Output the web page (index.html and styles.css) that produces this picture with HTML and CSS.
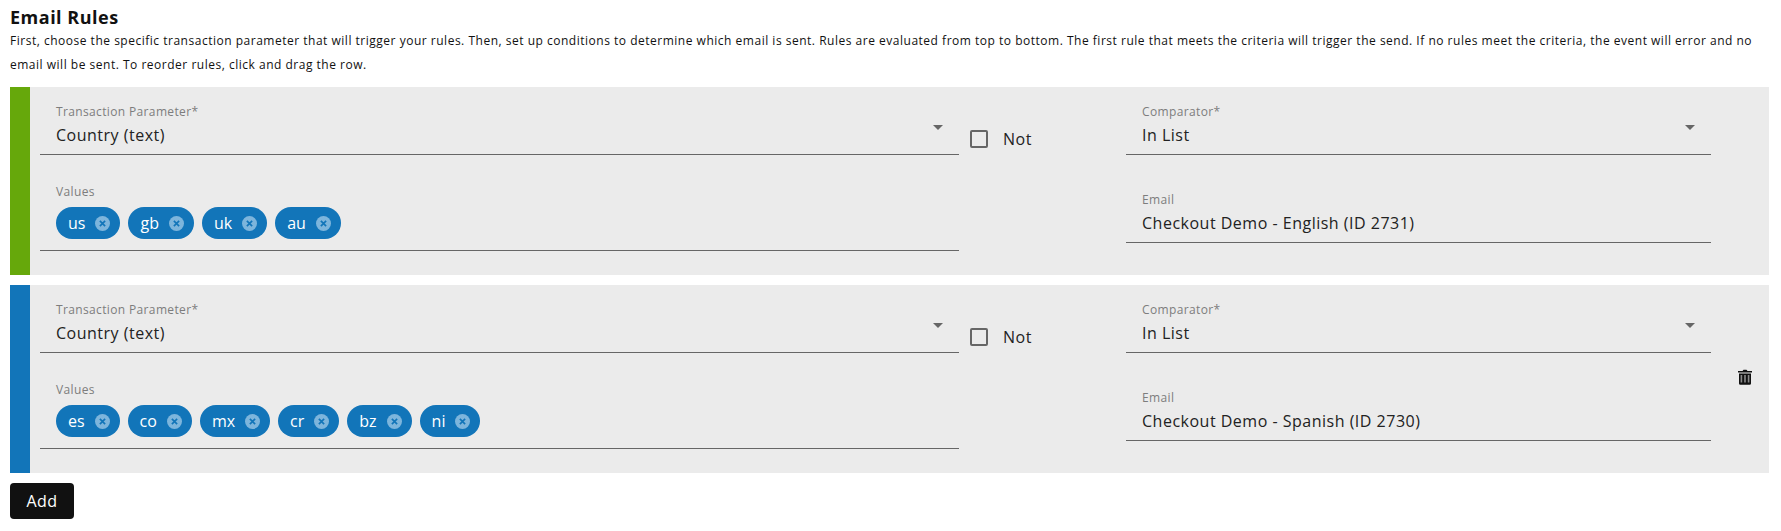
FILE: index.html
```html
<!DOCTYPE html>
<html lang="en">
<head>
    <meta charset="UTF-8">
    <meta name="viewport" content="width=device-width, initial-scale=1.0">
    <title>Email Rules</title>
    <link rel="stylesheet" href="styles.css">
</head>
<body>
    <h1 class="page-title">Email Rules</h1>
    <p class="page-intro">First, choose the specific transaction parameter that will trigger your rules. Then, set up conditions to determine which email is sent. Rules are evaluated from top to bottom. The first rule that meets the criteria will trigger the send. If no rules meet the criteria, the event will error and no email will be sent. To reorder rules, click and drag the row.</p>

    <div class="rule">
        <div class="rule-bar rule-bar-green"></div>
        <div class="rule-grid">
            <div class="field">
                <div class="field-label">Transaction Parameter*</div>
                <div class="field-value">Country (text)</div>
                <span class="select-arrow"></span>
            </div>
            <label class="not-check"><span class="check-box"></span>Not</label>
            <div class="field">
                <div class="field-label">Comparator*</div>
                <div class="field-value">In List</div>
                <span class="select-arrow"></span>
            </div>

            <div class="field field-chips">
                <div class="field-label">Values</div>
                <div class="chips">
                    <span class="chip">us<svg class="chip-x" viewBox="0 0 16 16"><circle cx="8" cy="8" r="8" fill="#7db5dc"/><path d="M5.2 5.2l5.6 5.6M10.8 5.2l-5.6 5.6" stroke="#1275b9" stroke-width="1.8" fill="none"/></svg></span>
                    <span class="chip">gb<svg class="chip-x" viewBox="0 0 16 16"><circle cx="8" cy="8" r="8" fill="#7db5dc"/><path d="M5.2 5.2l5.6 5.6M10.8 5.2l-5.6 5.6" stroke="#1275b9" stroke-width="1.8" fill="none"/></svg></span>
                    <span class="chip">uk<svg class="chip-x" viewBox="0 0 16 16"><circle cx="8" cy="8" r="8" fill="#7db5dc"/><path d="M5.2 5.2l5.6 5.6M10.8 5.2l-5.6 5.6" stroke="#1275b9" stroke-width="1.8" fill="none"/></svg></span>
                    <span class="chip">au<svg class="chip-x" viewBox="0 0 16 16"><circle cx="8" cy="8" r="8" fill="#7db5dc"/><path d="M5.2 5.2l5.6 5.6M10.8 5.2l-5.6 5.6" stroke="#1275b9" stroke-width="1.8" fill="none"/></svg></span>
                </div>
            </div>
            <div></div>
            <div class="field field-email">
                <div class="field-label">Email</div>
                <div class="field-value">Checkout Demo - English (ID 2731)</div>
            </div>
        </div>
    </div>

    <div class="rule">
        <div class="rule-bar rule-bar-blue"></div>
        <div class="rule-grid">
            <div class="field">
                <div class="field-label">Transaction Parameter*</div>
                <div class="field-value">Country (text)</div>
                <span class="select-arrow"></span>
            </div>
            <label class="not-check"><span class="check-box"></span>Not</label>
            <div class="field">
                <div class="field-label">Comparator*</div>
                <div class="field-value">In List</div>
                <span class="select-arrow"></span>
            </div>

            <div class="field field-chips">
                <div class="field-label">Values</div>
                <div class="chips">
                    <span class="chip">es<svg class="chip-x" viewBox="0 0 16 16"><circle cx="8" cy="8" r="8" fill="#7db5dc"/><path d="M5.2 5.2l5.6 5.6M10.8 5.2l-5.6 5.6" stroke="#1275b9" stroke-width="1.8" fill="none"/></svg></span>
                    <span class="chip">co<svg class="chip-x" viewBox="0 0 16 16"><circle cx="8" cy="8" r="8" fill="#7db5dc"/><path d="M5.2 5.2l5.6 5.6M10.8 5.2l-5.6 5.6" stroke="#1275b9" stroke-width="1.8" fill="none"/></svg></span>
                    <span class="chip">mx<svg class="chip-x" viewBox="0 0 16 16"><circle cx="8" cy="8" r="8" fill="#7db5dc"/><path d="M5.2 5.2l5.6 5.6M10.8 5.2l-5.6 5.6" stroke="#1275b9" stroke-width="1.8" fill="none"/></svg></span>
                    <span class="chip">cr<svg class="chip-x" viewBox="0 0 16 16"><circle cx="8" cy="8" r="8" fill="#7db5dc"/><path d="M5.2 5.2l5.6 5.6M10.8 5.2l-5.6 5.6" stroke="#1275b9" stroke-width="1.8" fill="none"/></svg></span>
                    <span class="chip">bz<svg class="chip-x" viewBox="0 0 16 16"><circle cx="8" cy="8" r="8" fill="#7db5dc"/><path d="M5.2 5.2l5.6 5.6M10.8 5.2l-5.6 5.6" stroke="#1275b9" stroke-width="1.8" fill="none"/></svg></span>
                    <span class="chip">ni<svg class="chip-x" viewBox="0 0 16 16"><circle cx="8" cy="8" r="8" fill="#7db5dc"/><path d="M5.2 5.2l5.6 5.6M10.8 5.2l-5.6 5.6" stroke="#1275b9" stroke-width="1.8" fill="none"/></svg></span>
                </div>
            </div>
            <div></div>
            <div class="field field-email">
                <div class="field-label">Email</div>
                <div class="field-value">Checkout Demo - Spanish (ID 2730)</div>
            </div>
        </div>
        <svg class="trash" viewBox="0 0 14 16">
            <path d="M0 2h4.5l1-1.2h3l1 1.2H14v1.6H0z" fill="#111"/>
            <path d="M1 4.4h12V14.4a1.4 1.4 0 0 1-1.4 1.4H2.4A1.4 1.4 0 0 1 1 14.4z" fill="#111"/>
            <path d="M3.4 6v7.6M7 6v7.6M10.6 6v7.6" stroke="#8a8a8a" stroke-width="1.6" fill="none"/>
        </svg>
    </div>

    <button class="add-btn">Add</button>
</body>
</html>
```

FILE: styles.css
```css
body {
    margin: 0;
    padding: 6px 12px 0 10px;
    font-family: "Open Sans", Arial, sans-serif;
    color: #111;
    background: #fff;
}
.page-title {
    margin: 0;
    font-size: 18px;
    line-height: 23px;
    letter-spacing: 0.5px;
    font-weight: 700;
}
.page-intro {
    margin: 0 0 10px;
    font-size: 12px;
    line-height: 24px;
    letter-spacing: 0.51px;
}
.rule {
    position: relative;
    display: flex;
    height: 188px;
    margin-bottom: 10px;
    background: #ebebeb;
}
.rule-bar {
    flex: none;
    width: 20px;
}
.rule-bar-green {
    background: #66a80b;
}
.rule-bar-blue {
    background: #1275b9;
}
.rule-grid {
    display: grid;
    grid-template-columns: 919px 167px 585px;
    grid-template-rows: 68px 96px;
    margin-left: 10px;
}
.field {
    position: relative;
    box-sizing: border-box;
    padding: 17px 16px 0;
    border-bottom: 1px solid #666;
}
.field-label {
    font-size: 12px;
    line-height: 16px;
    letter-spacing: 0.36px;
    color: #7d7d7d;
}
.field-value {
    margin-top: 3px;
    font-size: 16px;
    line-height: 24px;
    letter-spacing: 0.5px;
    color: #222;
}
.select-arrow {
    position: absolute;
    top: 38px;
    right: 16px;
    border-left: 5px solid transparent;
    border-right: 5px solid transparent;
    border-top: 5px solid #666;
}
.field-chips {
    padding-top: 29px;
}
.field-email {
    height: 88px;
    padding-top: 37px;
}
.chips {
    display: flex;
    gap: 8px;
    margin-top: 7px;
}
.chip {
    display: inline-flex;
    align-items: center;
    height: 32px;
    padding: 0 10px 0 12px;
    border-radius: 16px;
    background: #1275b9;
    color: #fff;
    font-size: 16px;
}
.chip-x {
    width: 15px;
    height: 15px;
    margin-left: 10px;
}
.not-check {
    display: flex;
    align-items: center;
    height: 18px;
    margin: 43px 0 0 11px;
    font-size: 16px;
    letter-spacing: 0.5px;
    color: #222;
}
.check-box {
    box-sizing: border-box;
    width: 18px;
    height: 18px;
    margin-right: 15px;
    border: 2px solid #666;
    border-radius: 2px;
}
.trash {
    position: absolute;
    top: 84px;
    right: 17px;
    width: 14px;
    height: 16px;
}
.add-btn {
    display: block;
    width: 64px;
    height: 36px;
    padding: 0;
    border: none;
    border-radius: 4px;
    background: #111;
    color: #fff;
    font-family: "Open Sans", Arial, sans-serif;
    font-size: 16px;
    letter-spacing: 0.5px;
}
```
